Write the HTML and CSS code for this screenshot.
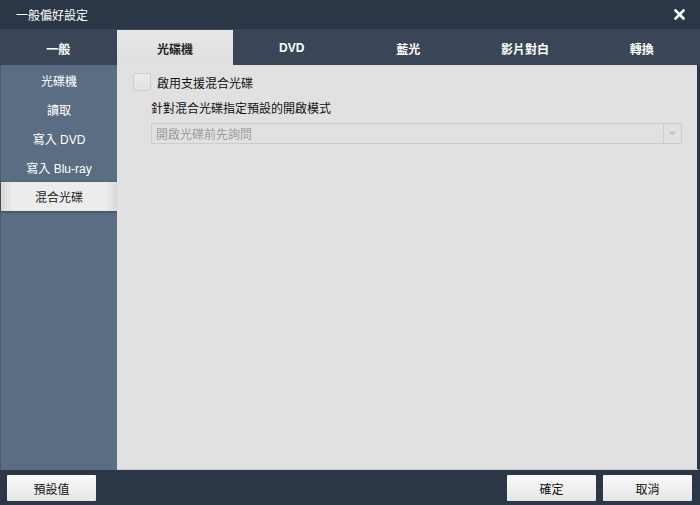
FILE: index.html
```html
<!DOCTYPE html>
<html lang="zh-Hant">
<head>
    <meta charset="UTF-8">
    <title>一般偏好設定</title>
    <link rel="stylesheet" href="styles.css">
</head>
<body>
    <div class="dialog">
        <div class="titlebar">
            <span class="title">一般偏好設定</span>
            <svg class="close" width="11" height="11" viewBox="0 0 11 11">
                <path d="M1.5 1.5 L9.5 9.5 M9.5 1.5 L1.5 9.5" stroke="#fff" stroke-width="2.6" stroke-linecap="square"/>
            </svg>
        </div>
        <div class="tabs">
            <div class="tab">一般</div>
            <div class="tab active">光碟機</div>
            <div class="tab">DVD</div>
            <div class="tab">藍光</div>
            <div class="tab">影片對白</div>
            <div class="tab">轉換</div>
        </div>
        <div class="main">
            <div class="sidebar">
                <div class="side-item">光碟機</div>
                <div class="side-item">讀取</div>
                <div class="side-item">寫入 DVD</div>
                <div class="side-item">寫入 Blu-ray</div>
                <div class="side-item selected">混合光碟</div>
            </div>
            <div class="content">
                <label class="check-row">
                    <span class="checkbox"></span>
                    <span>啟用支援混合光碟</span>
                </label>
                <div class="field-label">針對混合光碟指定預設的開啟模式</div>
                <div class="select">
                    <span class="select-text">開啟光碟前先詢問</span>
                    <span class="select-arrow">
                        <svg width="9" height="5" viewBox="0 0 9 5"><path d="M0.5 0.5 L8.5 0.5 L4.5 4.5 Z" fill="#c4c4c4"/></svg>
                    </span>
                </div>
            </div>
        </div>
        <div class="footer">
            <button class="btn">預設值</button>
            <div class="footer-right">
                <button class="btn">確定</button>
                <button class="btn">取消</button>
            </div>
        </div>
    </div>
</body>
</html>
```

FILE: styles.css
```css
body {
    margin: 0;
    font-family: "Liberation Sans", "Noto Sans CJK TC", sans-serif;
    font-size: 12px;
    background: #2b3747;
}

.dialog {
    width: 700px;
    height: 505px;
    display: flex;
    flex-direction: column;
    background: #2b3747;
}

.titlebar {
    height: 29px;
    display: flex;
    align-items: center;
    justify-content: space-between;
    padding: 0 15px 0 16px;
    color: #fff;
}

.title {
    font-size: 12px;
}

.close {
    display: block;
}

.tabs {
    height: 36px;
    display: flex;
    background: #3a4657;
}

.tab {
    flex: 1;
    display: flex;
    align-items: center;
    justify-content: center;
    color: #fff;
    font-weight: bold;
    font-size: 12px;
    padding-top: 2px;
}

.tab.active {
    background: linear-gradient(#e8e8e8, #dfdfdf);
    color: #222;
    margin-top: 1px;
}

.main {
    flex: 1;
    display: flex;
    min-height: 0;
}

.sidebar {
    width: 116px;
    background: #5a6d83;
    border-left: 1px solid #4a5b6e;
    padding-top: 1px;
}

.side-item {
    height: 29px;
    display: flex;
    align-items: center;
    justify-content: center;
    color: #fff;
    font-size: 12px;
}

.side-item.selected {
    background: linear-gradient(90deg, #d7d7d7, #ececec 10%, #ececec 90%, #d9d9d9);
    color: #222;
    box-shadow: 0 1px 3px rgba(0, 0, 0, 0.35);
}

.content {
    flex: 1;
    background: #e1e1e1;
    border-right: 3px solid #2b3747;
    border-bottom: 1px solid #c8ccd2;
    padding: 8px 15px 0 16px;
}

.check-row {
    display: flex;
    align-items: center;
    gap: 6px;
    color: #111;
    height: 18px;
}

.checkbox {
    width: 16px;
    height: 16px;
    background: linear-gradient(#ececec, #e0e0e0);
    border: 1px solid #cfcfcf;
    border-radius: 2px;
}

.field-label {
    margin: 9px 0 0 18px;
    color: #111;
    height: 18px;
    line-height: 18px;
}

.select {
    margin: 5px 0 0 18px;
    height: 19px;
    border: 1px solid #cdcdcd;
    display: flex;
    align-items: center;
    background: #e1e1e1;
}

.select-text {
    flex: 1;
    padding-left: 4px;
    color: #9d9d9d;
}

.select-arrow {
    width: 17px;
    height: 19px;
    border-left: 1px solid #cdcdcd;
    display: flex;
    align-items: center;
    justify-content: center;
}

.footer {
    height: 35px;
    display: flex;
    align-items: center;
    justify-content: space-between;
    padding: 0 8px 0 7px;
}

.footer-right {
    display: flex;
    gap: 7px;
}

.btn {
    width: 89px;
    height: 26px;
    border: none;
    border-radius: 1px;
    background: linear-gradient(#fafafa, #e6e6e6);
    font-family: "Liberation Sans", "Noto Sans CJK TC", sans-serif;
    font-size: 12px;
    color: #111;
    margin-top: 1px;
}
```
